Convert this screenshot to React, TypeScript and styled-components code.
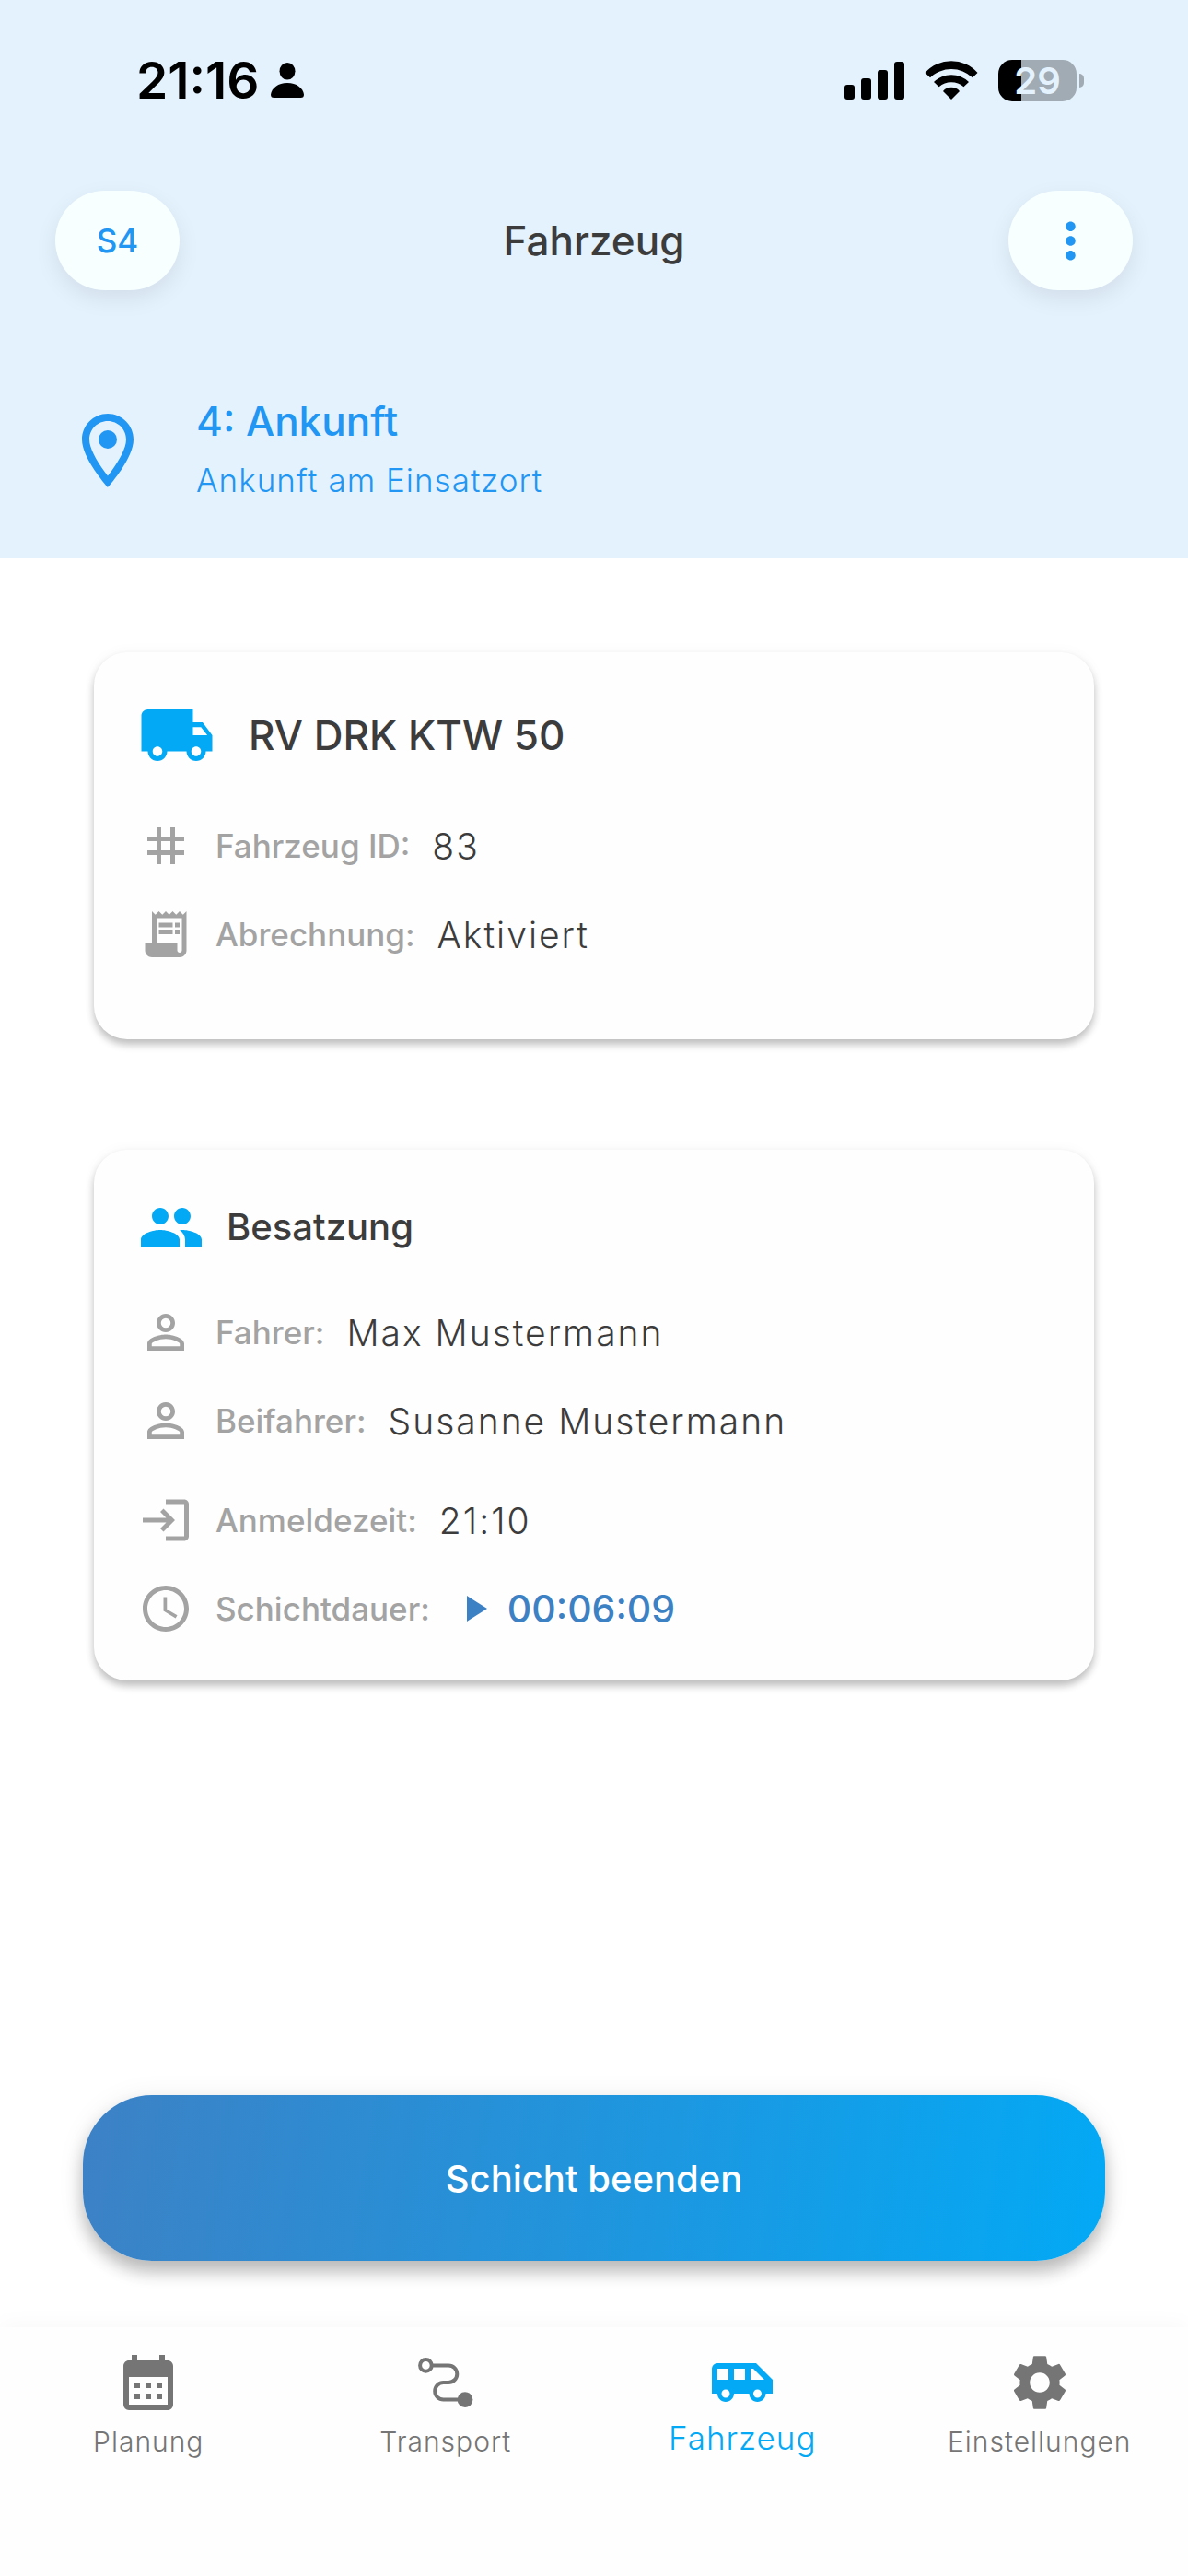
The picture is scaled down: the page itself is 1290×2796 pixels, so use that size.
import React from "react";
import styled, { createGlobalStyle } from "styled-components";
import {
  MdAccessTime,
  MdAirportShuttle,
  MdCalendarMonth,
  MdLocalShipping,
  MdLogin,
  MdMoreVert,
  MdOutlineLocationOn,
  MdPeople,
  MdPersonOutline,
  MdPlayArrow,
  MdReceiptLong,
  MdSettings,
  MdTag,
} from "react-icons/md";

const color = {
  headerBg: "#e4f2fe",
  surface: "#fefefe",
  pill: "#f7ffff",
  blue: "#2196f3",
  accent: "#03a9f5",
  steel: "#3d81c5",
  text: "#3c3c3c",
  muted: "#a3a3a3",
  nav: "#757575",
};

const GlobalStyle = createGlobalStyle`
  *, *::before, *::after { box-sizing: border-box; }
  body {
    margin: 0;
    background: #fff;
    color: ${color.text};
    font-family: Inter, Roboto, "Liberation Sans", sans-serif;
  }
  h1, h2, p, dl, dd { margin: 0; }
  button { font-family: inherit; border: 0; cursor: pointer; }
  svg { display: block; flex: none; }
`;

const Screen = styled.div`
  display: flex;
  flex-direction: column;
  min-height: 100vh;
`;

const Header = styled.header`
  background: ${color.headerBg};
`;

const StatusBar = styled.div`
  display: flex;
  align-items: center;
  justify-content: space-between;
  height: 174px;
  padding: 0 113px 0 148px;
  color: #000;
`;

const StatusGroup = styled.div<{ $gap: number }>`
  display: flex;
  align-items: center;
  gap: ${(p) => p.$gap}px;
`;

const Clock = styled.time`
  font-size: 55px;
  font-weight: 600;
  line-height: 60px;
`;

const Battery = styled.div`
  display: flex;
  align-items: center;
  gap: 3px;
`;

const BatteryBody = styled.span<{ $level: number }>`
  display: grid;
  place-items: center;
  width: 85px;
  height: 45px;
  border-radius: 15px;
  background: linear-gradient(to right, #000 ${(p) => p.$level}%, #a0abb4 ${(p) => p.$level}%);
  color: ${color.headerBg};
  font-size: 40px;
  font-weight: 600;
  line-height: 45px;
`;

const BatteryCap = styled.span`
  width: 5px;
  height: 15px;
  border-radius: 0 8px 8px 0;
  background: #a0abb4;
`;

const AppBar = styled.div`
  display: grid;
  grid-template-columns: 135px 1fr 135px;
  align-items: center;
  height: 174px;
  padding: 0 60px;
`;

const PageTitle = styled.h1`
  font-size: 44px;
  font-weight: 500;
  line-height: 64px;
  text-align: center;
`;

const PillButton = styled.button`
  display: grid;
  place-items: center;
  height: 108px;
  padding: 0;
  border-radius: 54px;
  background: ${color.pill};
  box-shadow: 0 9px 24px rgba(0, 0, 0, 0.08);
  color: ${color.blue};
  font-size: 35px;
  font-weight: 500;
`;

const Mission = styled.section`
  display: flex;
  align-items: center;
  gap: 48px;
  padding: 77px 69px 53px;
  color: ${color.blue};
`;

const MissionTitle = styled.h2`
  font-size: 44px;
  font-weight: 500;
  line-height: 64px;
`;

const MissionDetail = styled.p`
  color: ${color.blue};
  font-size: 35px;
  font-weight: 300;
  line-height: 64px;
  letter-spacing: 1px;
`;

const Main = styled.main`
  display: flex;
  flex: 1;
  flex-direction: column;
  gap: 120px;
  padding: 102px 90px 72px;
`;

const Card = styled.section`
  margin: 0 12px;
  padding: 48px;
  border-radius: 36px;
  background: ${color.surface};
  box-shadow:
    0 6px 9px rgba(0, 0, 0, 0.24),
    0 0 15px rgba(0, 0, 0, 0.04);
`;

const CardHead = styled.div<{ $gap: number }>`
  display: flex;
  align-items: center;
  gap: ${(p) => p.$gap}px;
  margin-bottom: 48px;

  > svg { color: ${color.accent}; }
`;

const CardTitle = styled.h2<{ $size: number }>`
  font-size: ${(p) => p.$size}px;
  font-weight: 500;
  line-height: 64px;
`;

const Facts = styled.dl<{ $after?: number }>`
  display: grid;
  gap: 36px;
  margin-bottom: ${(p) => p.$after ?? 0}px;
`;

const FactRow = styled.div`
  display: flex;
  align-items: center;
  gap: 24px;
  height: 60px;

  > svg { color: ${color.muted}; }
`;

const FactLabel = styled.dt`
  color: ${color.muted};
  font-size: 35px;
  font-weight: 500;
`;

const FactValue = styled.dd`
  font-size: 39px;
  font-weight: 300;
  letter-spacing: 2px;
`;

const Timer = styled.dd`
  display: flex;
  align-items: center;
  gap: 12px;
  color: ${color.steel};
  font-size: 41px;
  font-weight: 500;
`;

const EndShift = styled.button`
  height: 180px;
  margin-top: auto;
  border-radius: 75px;
  background: linear-gradient(99deg, ${color.steel}, ${color.accent});
  box-shadow:
    0 12px 18px rgba(0, 0, 0, 0.24),
    0 3px 30px rgba(0, 0, 0, 0.08);
  color: #fff;
  font-size: 40px;
  font-weight: 500;
`;

const TabBar = styled.nav`
  display: grid;
  grid-template-columns: repeat(4, 1fr);
  padding: 24px 0 126px;
  background: ${color.surface};
  box-shadow: 0 -3px 24px rgba(0, 0, 0, 0.03);
`;

const Tab = styled.a<{ $active?: boolean }>`
  display: flex;
  flex-direction: column;
  align-items: center;
  gap: 4px;
  height: 120px;
  color: ${(p) => (p.$active ? color.accent : color.nav)};
  font-size: ${(p) => (p.$active ? 35 : 30)}px;
  font-weight: 300;
  line-height: ${(p) => (p.$active ? 40 : 48)}px;
  letter-spacing: 1px;
  text-decoration: none;
`;

const PersonGlyph = () => (
  <svg width="36" height="38" viewBox="0 0 36 38" fill="currentColor" aria-hidden="true">
    <ellipse cx="18" cy="9.3" rx="8.5" ry="9.3" />
    <path d="M3.500 38C1 38 0 37 0 34.500C1 27.500 8 22 18 22s17 5.500 18 12.500c0 2.500-1 3.500-3.500 3.500z" />
  </svg>
);

const SignalGlyph = () => (
  <svg width="65" height="41" viewBox="0 0 65 41" fill="currentColor" aria-hidden="true">
    <rect x="0" y="25" width="11" height="16" rx="3" />
    <rect x="18" y="18" width="11" height="23" rx="3" />
    <rect x="36" y="9" width="11" height="32" rx="3" />
    <rect x="54" y="0" width="11" height="41" rx="3" />
  </svg>
);

const WifiGlyph = () => (
  <svg width="58" height="42" viewBox="0 0 58 42" fill="currentColor" aria-hidden="true">
    <path d="M.5 13A38 38 0 0 1 57.500 13L52 18.300A33 33 0 0 0 6 18.300Z" />
    <path d="M10 23A27 27 0 0 1 48 23L42.400 28.300A20.500 20.500 0 0 0 15.600 28.300Z" />
    <path d="M20 33A11.500 11.500 0 0 1 38 33L29 42Z" />
  </svg>
);

const RouteGlyph = () => (
  <svg width="72" height="72" viewBox="0 0 72 72" fill="none" stroke="currentColor" strokeWidth="4" aria-hidden="true">
    <circle cx="14.400" cy="17.400" r="6.300" />
    <path d="M21 17.400H39a9.300 9.300 0 0 1 0 18.600H33.500a9.300 9.300 0 0 0 0 18.600H52" />
    <circle cx="57" cy="54.600" r="8.400" fill="currentColor" stroke="none" />
  </svg>
);

const Fact = ({ icon, label, value }: { icon: React.ReactNode; label: string; value: string }) => (
  <FactRow>
    {icon}
    <FactLabel>{label}</FactLabel>
    <FactValue>{value}</FactValue>
  </FactRow>
);

export default function App() {
  return (
    <>
      <GlobalStyle />
      <Screen>
        <Header>
          <StatusBar>
            <StatusGroup $gap={12}>
              <Clock>21:16</Clock>
              <PersonGlyph />
            </StatusGroup>
            <StatusGroup $gap={22}>
              <SignalGlyph />
              <WifiGlyph />
              <Battery>
                <BatteryBody $level={29}>29</BatteryBody>
                <BatteryCap />
              </Battery>
            </StatusGroup>
          </StatusBar>
          <AppBar>
            <PillButton type="button">S4</PillButton>
            <PageTitle>Fahrzeug</PageTitle>
            <PillButton type="button" aria-label="Menü">
              <MdMoreVert size={63} />
            </PillButton>
          </AppBar>
          <Mission>
            <MdOutlineLocationOn size={96} />
            <div>
              <MissionTitle>4: Ankunft</MissionTitle>
              <MissionDetail>Ankunft am Einsatzort</MissionDetail>
            </div>
          </Mission>
        </Header>

        <Main>
          <Card>
            <CardHead $gap={36}>
              <MdLocalShipping size={84} />
              <CardTitle $size={44}>RV DRK KTW 50</CardTitle>
            </CardHead>
            <Facts $after={36}>
              <Fact icon={<MdTag size={60} />} label="Fahrzeug ID:" value="83" />
              <Fact icon={<MdReceiptLong size={60} />} label="Abrechnung:" value="Aktiviert" />
            </Facts>
          </Card>

          <Card>
            <CardHead $gap={24}>
              <MdPeople size={72} />
              <CardTitle $size={40}>Besatzung</CardTitle>
            </CardHead>
            <Facts $after={48}>
              <Fact icon={<MdPersonOutline size={60} />} label="Fahrer:" value="Max Mustermann" />
              <Fact icon={<MdPersonOutline size={60} />} label="Beifahrer:" value="Susanne Mustermann" />
            </Facts>
            <Facts>
              <Fact icon={<MdLogin size={60} />} label="Anmeldezeit:" value="21:10" />
              <FactRow>
                <MdAccessTime size={60} />
                <FactLabel>Schichtdauer:</FactLabel>
                <Timer>
                  <MdPlayArrow size={48} />
                  00:06:09
                </Timer>
              </FactRow>
            </Facts>
          </Card>

          <EndShift type="button">Schicht beenden</EndShift>
        </Main>

        <TabBar>
          <Tab href="#planung">
            <MdCalendarMonth size={72} />
            Planung
          </Tab>
          <Tab href="#transport">
            <RouteGlyph />
            Transport
          </Tab>
          <Tab href="#fahrzeug" $active aria-current="page">
            <MdAirportShuttle size={72} />
            Fahrzeug
          </Tab>
          <Tab href="#einstellungen">
            <MdSettings size={72} />
            Einstellungen
          </Tab>
        </TabBar>
      </Screen>
    </>
  );
}
